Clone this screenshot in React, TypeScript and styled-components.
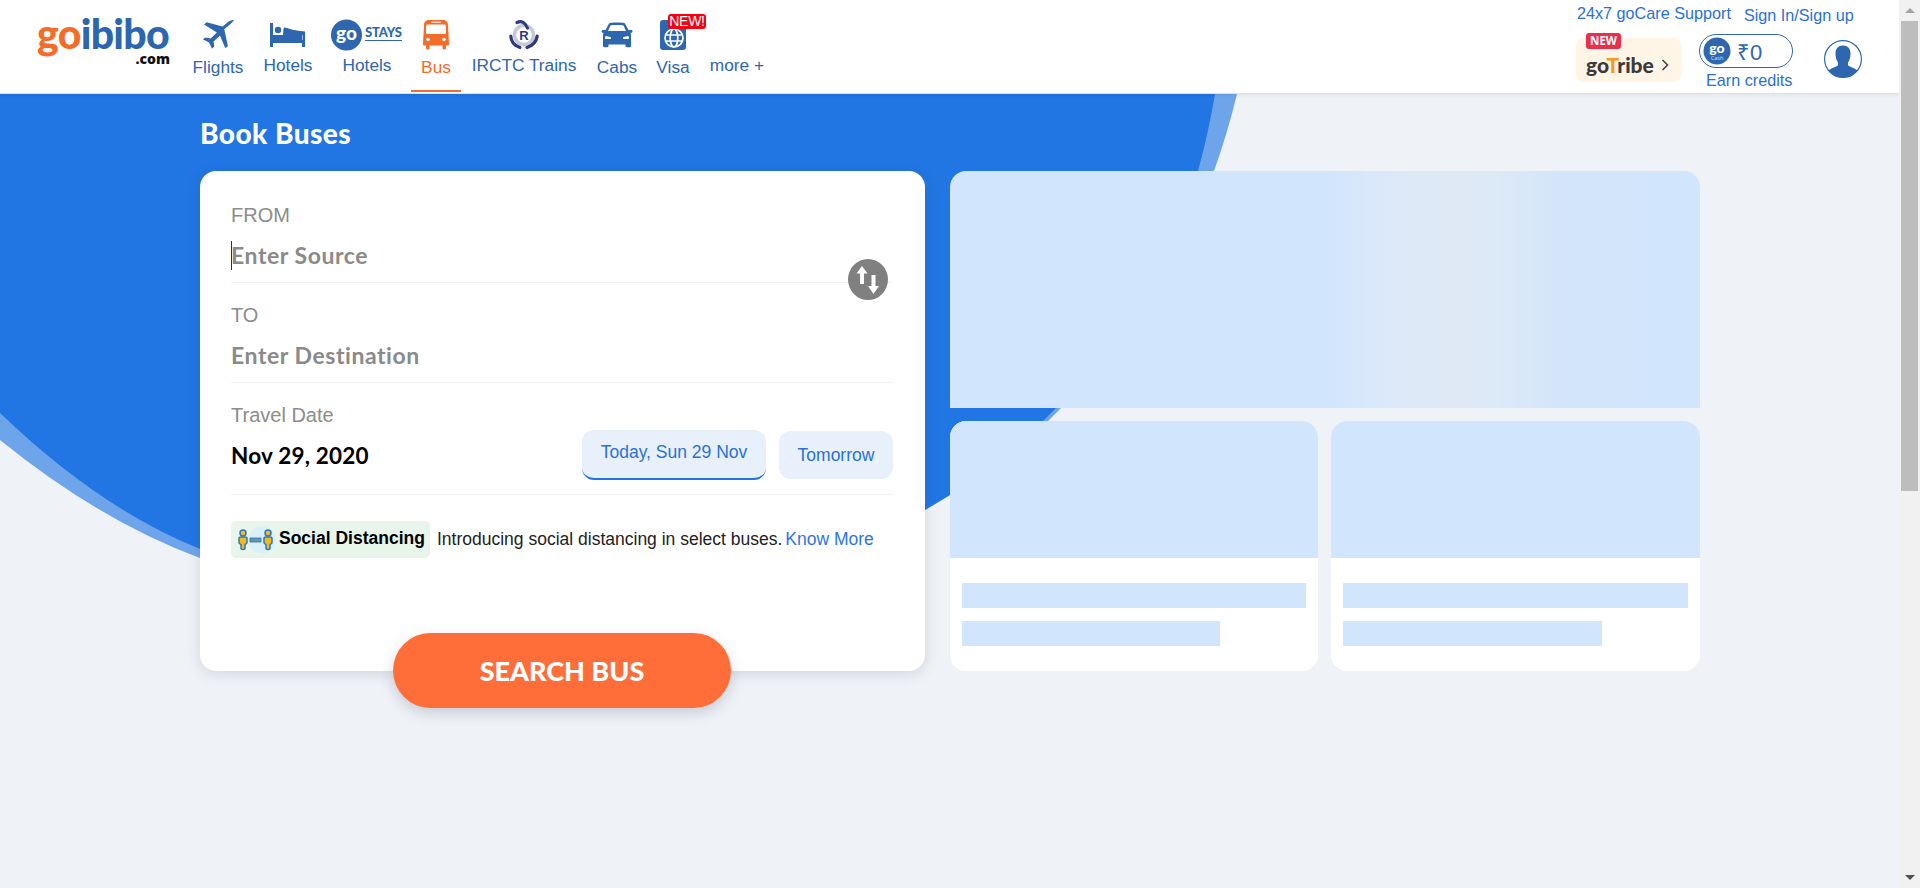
import React from "react";
import styled, { createGlobalStyle } from "styled-components";

const Global = createGlobalStyle`
  html, body { margin: 0; padding: 0; height: 100%; overflow: hidden; background: #eff2f7; }
  #root { height: 100%; }
  * { box-sizing: border-box; }
`;

const Shell = styled.div`
  display: flex;
  height: 888px;
  font-family: "Liberation Sans", Arial, sans-serif;
`;
const Viewport = styled.div`
  position: relative;
  flex: 1;
  min-width: 0;
  overflow: hidden;
  background: #eff2f7;
`;
const Scrollbar = styled.div`
  width: 21px;
  background: #f1f1f1;
  display: flex;
  flex-direction: column;
  align-items: center;
`;
const ScrollArrow = styled.div<{ $down?: boolean }>`
  height: 21px;
  width: 100%;
  display: flex;
  align-items: center;
  justify-content: center;
  flex: none;
  &::before {
    content: "";
    width: 0;
    height: 0;
    border-left: 5px solid transparent;
    border-right: 5px solid transparent;
    ${(p) =>
      p.$down
        ? "border-top: 5px solid #505050;"
        : "border-bottom: 5px solid #a3a3a3;"}
  }
`;
const ScrollThumb = styled.div`
  width: 17px;
  height: 470px;
  background: #bdbdbd;
  flex: none;
`;
const ScrollRest = styled.div`
  flex: 1;
`;

const Wave = styled.svg`
  position: absolute;
  left: 0;
  top: 0;
  width: 1899px;
  height: 888px;
`;

const Header = styled.header`
  position: relative;
  height: 94px;
  background: #fff;
  border-bottom: 1px solid #dfe1e5;
  box-shadow: 0 1px 4px rgba(0, 0, 0, 0.08);
  display: flex;
`;
const LogoBox = styled.div`
  width: 183px;
  flex: none;
  padding: 15px 0 0 37px;
`;
const LogoWord = styled.div`
  width: 133px;
  font-family: "Lato", sans-serif;
  font-weight: 900;
  font-size: 41px;
  line-height: 38px;
  letter-spacing: -0.7px;
  color: #2c66b1;
  white-space: nowrap;
`;
const LogoGo = styled.span`
  color: #f56c28;
`;
const LogoCom = styled.div`
  width: 133px;
  text-align: right;
  font-family: "Open Sans", sans-serif;
  font-weight: 800;
  font-size: 14px;
  line-height: 12px;
  color: #111;
`;
const Nav = styled.nav`
  display: flex;
  height: 93px;
`;
const NavItem = styled.a<{ $w: number; $active?: boolean }>`
  position: relative;
  width: ${(p) => p.$w}px;
  height: 93px;
  display: block;
  text-align: center;
  color: ${(p) => (p.$active ? "#f26b2c" : "#2e66b0")};
  font-size: 17.3px;
  line-height: 20px;
  white-space: nowrap;
`;
const NavIcon = styled.div`
  height: 36px;
  margin-top: 17px;
  display: flex;
  align-items: center;
  justify-content: center;
`;
const NavLabel = styled.div<{ $low?: boolean }>`
  margin-top: ${(p) => (p.$low ? 4 : 2)}px;
`;
const ActiveBar = styled.div`
  position: absolute;
  left: 0;
  right: 0;
  bottom: 1px;
  height: 2px;
  background: #f26b2c;
`;
const NewBadge = styled.span`
  position: absolute;
  left: 21px;
  top: 14px;
  width: 38px;
  height: 15px;
  border-radius: 3px;
  background: #f5000f;
  color: #fff;
  font-size: 14px;
  line-height: 15px;
  text-align: center;
  letter-spacing: -0.3px;
`;
const HeaderRight = styled.div`
  margin-left: auto;
  width: 323px;
  flex: none;
  display: flex;
  flex-direction: column;
`;
const TopLinks = styled.div`
  display: flex;
  height: 33px;
  padding-top: 4px;
  font-size: 16.2px;
  color: #2a70d6;
`;
const SupportLink = styled.a`
  line-height: 19px;
  margin-left: 1px;
`;
const SignLink = styled.a`
  line-height: 19px;
  margin: 2px 0 0 13px;
`;
const BottomRow = styled.div`
  display: flex;
`;
const TribeBox = styled.div`
  position: relative;
  width: 105px;
  height: 44px;
  margin-top: 5px;
  border-radius: 7px;
  background: #fff5e6;
  display: flex;
  align-items: center;
  padding: 9px 0 0 10px;
`;
const TribeTag = styled.span`
  position: absolute;
  left: 10px;
  top: -5px;
  width: 35px;
  height: 16px;
  border-radius: 3px;
  background: #e8304e;
  color: #fff;
  font-family: "Open Sans", sans-serif;
  font-weight: 700;
  font-size: 11.5px;
  line-height: 16px;
  text-align: center;
`;
const TribeWord = styled.span`
  font-family: "Lato", sans-serif;
  font-weight: 900;
  font-size: 21px;
  line-height: 24px;
  color: #3b3b3b;
`;
const TribeT = styled.span`
  color: #f59a23;
`;
const TribeChevron = styled.svg`
  margin-left: 7px;
`;
const CreditCol = styled.div`
  width: 94px;
  margin-left: 18px;
  display: flex;
  flex-direction: column;
`;
const CreditPill = styled.div`
  height: 34px;
  margin-top: 1px;
  border: 1px solid #2e66b0;
  border-radius: 17px;
  display: flex;
  align-items: center;
  padding-left: 3px;
`;
const CreditAmount = styled.span`
  margin-left: 6px;
  font-size: 22px;
  color: #2e66b0;
`;
const EarnLink = styled.a`
  margin: 3px 0 0 7px;
  font-size: 16.2px;
  line-height: 19px;
  color: #2a70d6;
  white-space: nowrap;
`;
const Avatar = styled.div`
  margin: 7px 0 0 31px;
`;

const Main = styled.main`
  position: relative;
  padding-left: 200px;
  width: 1700px;
`;
const Title = styled.h1`
  margin: 0;
  padding-top: 24px;
  height: 77px;
  font-family: "Lato", sans-serif;
  font-weight: 900;
  font-size: 28px;
  line-height: 30px;
  letter-spacing: 0.45px;
  color: #fff;
`;
const Columns = styled.div`
  display: grid;
  grid-template-columns: 725px 750px;
  column-gap: 25px;
`;
const SearchCard = styled.section`
  position: relative;
  height: 500px;
  background: #fff;
  border-radius: 16px;
  padding: 12px 33px 0 31px;
  box-shadow: 0 3px 14px rgba(60, 70, 90, 0.16);
`;
const Field = styled.div<{ $pb?: number }>`
  padding: 19px 0 ${(p) => p.$pb ?? 10}px;
  border-bottom: 1px solid #eff1f5;
`;
const FieldLabel = styled.div`
  height: 24px;
  font-size: 20px;
  line-height: 26px;
  color: #8c8c8c;
`;
const PlaceholderText = styled.div<{ $caret?: boolean }>`
  position: relative;
  margin-top: 14px;
  height: 32px;
  font-family: "Lato", sans-serif;
  font-weight: 700;
  font-size: 23px;
  line-height: 30px;
  letter-spacing: 0.55px;
  color: #8a8a8a;
  ${(p) =>
    p.$caret
      ? `&::before { content: ""; position: absolute; left: 0; top: 1px; width: 1px; height: 29px; background: #333; }`
      : ""}
`;
const DateRow = styled.div`
  display: flex;
  align-items: center;
  height: 50px;
  margin: 4px -1px 0 0;
`;
const DateValue = styled.div`
  font-family: "Lato", sans-serif;
  font-weight: 700;
  font-size: 22.5px;
  letter-spacing: 0.2px;
  color: #000;
  margin-right: auto;
`;
const Chip = styled.div<{ $active?: boolean }>`
  width: ${(p) => (p.$active ? 184 : 114)}px;
  height: ${(p) => (p.$active ? 50 : 48)}px;
  padding-bottom: ${(p) => (p.$active ? 4 : 0)}px;
  margin-left: ${(p) => (p.$active ? 0 : 13)}px;
  border-radius: 12px;
  background: #e8f0fb;
  ${(p) => (p.$active ? "border-bottom: 2px solid #2276e3;" : "")}
  color: #2a70d6;
  font-size: 17.5px;
  display: flex;
  align-items: center;
  justify-content: center;
  white-space: nowrap;
`;
const SocialRow = styled.div`
  display: flex;
  align-items: center;
  margin-top: 26px;
`;
const SocialTag = styled.div`
  width: 199px;
  height: 37px;
  border-radius: 5px;
  background: #e8f5ea;
  display: flex;
  align-items: center;
  padding: 0 0 3px 6px;
  font-weight: 700;
  font-size: 17.5px;
  color: #000;
  white-space: nowrap;
`;
const SocialIcon = styled.svg`
  margin: 3px 2px 0 0;
  flex: none;
`;
const SocialText = styled.span`
  margin-left: 7px;
  font-size: 17.5px;
  color: #222;
  white-space: nowrap;
`;
const KnowMore = styled.a`
  margin-left: 3px;
  font-size: 17.5px;
  color: #2f74e6;
  white-space: nowrap;
`;
const SwapButton = styled.div`
  position: absolute;
  left: 648px;
  top: 88px;
  width: 40px;
  height: 41px;
  border-radius: 50%;
  background: #808080;
  display: flex;
  align-items: center;
  justify-content: center;
`;
const SearchButton = styled.button`
  position: absolute;
  left: 193px;
  top: 462px;
  width: 338px;
  height: 75px;
  border: 0;
  border-radius: 38px;
  background: #ff6d38;
  color: #fff;
  font-family: "Lato", sans-serif;
  font-weight: 900;
  font-size: 27px;
  box-shadow: 0 5px 14px rgba(60, 70, 90, 0.22);
`;
const OfferColumn = styled.aside`
  display: flex;
  flex-direction: column;
  gap: 13px;
`;
const Banner = styled.div`
  height: 237px;
  border-radius: 16px 16px 0 0;
  background: linear-gradient(
    90deg,
    #d1e5fd 0%,
    #d1e5fd 50%,
    #d9e8fa 56%,
    #dde9f7 62%,
    #dfe9f5 68%,
    #dce9f7 73%,
    #d3e5fb 82%,
    #d1e5fd 100%
  );
`;
const OfferGrid = styled.div`
  display: grid;
  grid-template-columns: 368px 369px;
  gap: 13px;
`;
const OfferCard = styled.div`
  height: 250px;
  background: #fff;
  border-radius: 16px;
  overflow: hidden;
`;
const OfferImage = styled.div`
  height: 137px;
  background: #d1e5fd;
`;
const OfferBody = styled.div`
  padding: 25px 12px 0;
`;
const OfferBar = styled.div<{ $short?: boolean }>`
  height: 25px;
  width: ${(p) => (p.$short ? "75%" : "100%")};
  background: #d1e5fd;
  margin-bottom: 13px;
`;

const Blue = "#2e66b0";

const PlaneIcon = () => (
  <svg width="34" height="34" viewBox="0 0 36 36">
    <path
      fill={Blue}
      d="M35 2.500c-1-1-3.600-.3-6 1.600l-6.200 5L6 4.600 3.200 7l13.600 8.400-6.600 6.200-5.400-1L2 22.400l6.500 3.600 3.200 6.500 2.400-2.500-.8-5.200 6.800-6.200 5.700 13.400 2.700-2.400-3.900-17.600 6.600-5.600c2.200-2.100 4.600-4.900 3.800-5.900z"
    />
  </svg>
);
const BedIcon = () => (
  <svg width="36" height="26" viewBox="0 0 36 26">
    <path fill={Blue} d="M0 1h3v17h29v-7.500l-17-5c-1-.3-1.500.5-1.500 1.500V13H3v5h29.500V11H35v14h-3v-4H3v4H0z" />
    <path fill={Blue} d="M14 7l21 2.500V13H13z" />
    <circle cx="8" cy="8" r="3.200" fill={Blue} />
  </svg>
);
const StaysIcon = () => (
  <svg width="72" height="32" viewBox="0 0 72 32">
    <circle cx="15.500" cy="16" r="15.500" fill={Blue} />
    <text x="15.500" y="21" textAnchor="middle" fontFamily="Lato" fontWeight="900" fontSize="19" fill="#fff">
      go
    </text>
    <text x="34" y="18" fontFamily="Lato" fontWeight="900" fontSize="13" fill={Blue} textLength="37">
      STAYS
    </text>
    <rect x="34" y="21" width="37" height="1" fill={Blue} />
  </svg>
);
const BusIcon = () => (
  <svg width="26" height="32" viewBox="0 0 26 32">
    <path
      fill="#f56c28"
      d="M6 1h14c3 0 5 2 5 5l1 19c0 1-.5 1.500-1.500 1.500H23V29c0 2-3.500 2-3.500 0v-2.500h-13V29c0 2-3.500 2-3.500 0v-2.500H1.500C.5 26.500 0 26 0 25L1 6c0-3 2-5 5-5z"
    />
    <rect x="3" y="5.500" width="20" height="9.500" rx="1.500" fill="#fff" />
    <rect x="8" y="2.500" width="10" height="1.500" rx=".75" fill="#ffd9c6" />
    <circle cx="5" cy="20.500" r="1.800" fill="#fff" />
    <circle cx="21" cy="20.500" r="1.800" fill="#fff" />
  </svg>
);
const IrctcIcon = () => (
  <svg width="30" height="32" viewBox="0 0 30 32">
    <circle cx="15" cy="16" r="9.500" fill="none" stroke="#c6c9d3" strokeWidth="3.500" />
    <g fill="none" stroke="#2d3a7c" strokeWidth="3.200" strokeLinecap="round">
      <path d="M8 3.500Q15 .5 18.500 9" />
      <path d="M1.800 17Q2 25.500 11 28.500" />
      <path d="M28.200 17Q27 25.500 18 28.500" />
    </g>
    <text x="15" y="21" textAnchor="middle" fontFamily="Liberation Sans" fontWeight="700" fontSize="13" fill="#2d3a7c">
      R
    </text>
  </svg>
);
const CarIcon = () => (
  <svg width="32" height="26" viewBox="0 0 32 26">
    <path
      fill={Blue}
      d="M8 1.500C9 .8 11 .5 16 .5s7 .3 8 1l3.500 6.500H30c1 0 1.500.5 1.500 1.300S31 11 29.500 11l.5 1.500V24c0 .8-.5 1.200-1.200 1.200h-3c-.8 0-1.300-.4-1.300-1.200v-1.500h-17V24c0 .8-.5 1.200-1.300 1.200h-3C2.500 25.200 2 24.800 2 24V12.500L2.500 11C1 11 .5 10 .5 9.300S1 8 2 8h2.500z"
    />
    <path fill="#fff" d="M9.500 3.500C11 3 13 3 16 3s5 0 6.500.5L25 9H7z" />
    <path fill="#fff" d="M4.500 14l5 1c.8.3.8 2-.3 2H5c-.7 0-1-.5-1-1zM27.500 14l-5 1c-.8.3-.8 2 .3 2H27c.7 0 1-.5 1-1z" />
  </svg>
);
const VisaIcon = () => (
  <svg width="26" height="32" viewBox="0 0 26 32">
    <rect y="1" width="26" height="30" rx="3" fill={Blue} />
    <g fill="none" stroke="#fff" strokeWidth="1.700">
      <circle cx="14" cy="19" r="9" />
      <ellipse cx="14" cy="19" rx="3.800" ry="9" />
      <path d="M5.500 16h17M5.500 22h17" />
    </g>
  </svg>
);
const GoCash = () => (
  <svg width="28" height="28" viewBox="0 0 28 28">
    <circle cx="14" cy="14" r="13.500" fill={Blue} />
    <text x="14" y="15.500" textAnchor="middle" fontFamily="Lato" fontWeight="900" fontSize="14" fill="#fff">
      go
    </text>
    <text x="14" y="22.500" textAnchor="middle" fontFamily="Open Sans" fontSize="5.500" fill="#cfe0f5">
      Cash
    </text>
  </svg>
);
const AvatarIcon = () => (
  <svg width="38" height="38" viewBox="0 0 38 38">
    <circle cx="19" cy="19" r="18.400" fill="#fff" stroke={Blue} strokeWidth="1.200" />
    <path
      fill={Blue}
      d="M19 5.500c4.800 0 7.500 3 7.500 8 0 4-1 7-2.500 9v2.500c0 1.500 6 2.500 9.500 5.500A18 18 0 0 1 19 37.200 18 18 0 0 1 4.500 30.500C8 27.500 14 26.500 14 25v-2.500c-1.500-2-2.500-5-2.500-9 0-5 2.700-8 7.500-8z"
    />
  </svg>
);
const Person = ({ x }: { x: number }) => (
  <g>
    <circle cx={x} cy="7" r="3" fill="#f7b917" stroke="#2d78c4" strokeWidth="1.500" />
    <path
      d={`M${x - 4} 12.500c0-1 1-1.500 2-1.500h4c1 0 2 .5 2 1.500v4c0 1.300-1.500 1.500-2 2v3.500c0 1-1 1.500-2 1.500s-2-.5-2-1.500v-3.500c-.5-.5-2-.7-2-2z`}
      fill="#f7b917"
      stroke="#2d78c4"
      strokeWidth="1.500"
    />
  </g>
);
const SocialGlyph = () => (
  <SocialIcon width="40" height="28" viewBox="0 0 40 28">
    <ellipse cx="25" cy="14" rx="14" ry="13.500" fill="#d9f0f8" />
    <Person x={6} />
    <rect x="13" y="12" width="11" height="4" fill="#6a93a8" stroke="#2d78c4" strokeWidth=".8" />
    <Person x={31} />
  </SocialIcon>
);

export default function App() {
  return (
    <>
      <Global />
      <Shell>
        <Viewport>
          <Wave viewBox="0 0 1899 888" aria-hidden>
            <path
              fill="#6ea5ea"
              d="M0 94H1237Q1227 135 1214 171C1170 290 1115 360 1061 408L1048 421L950 495L925 510L200 558Q100 521 0 440Z"
            />
            <path
              fill="#2176e3"
              d="M0 94H1215Q1208 135 1198 171C1160 290 1100 365 1056 408L1043 421L950 495L925 510L200 549Q100 509 0 413Z"
            />
          </Wave>
          <Header>
            <LogoBox>
              <LogoWord>
                <LogoGo>go</LogoGo>ibibo
              </LogoWord>
              <LogoCom>.com</LogoCom>
            </LogoBox>
            <Nav>
              <NavItem $w={70}>
                <NavIcon><PlaneIcon /></NavIcon>
                <NavLabel $low>Flights</NavLabel>
              </NavItem>
              <NavItem $w={70}>
                <NavIcon><BedIcon /></NavIcon>
                <NavLabel>Hotels</NavLabel>
              </NavItem>
              <NavItem $w={88}>
                <NavIcon><StaysIcon /></NavIcon>
                <NavLabel>Hotels</NavLabel>
              </NavItem>
              <NavItem $w={50} $active>
                <NavIcon><BusIcon /></NavIcon>
                <NavLabel $low>Bus</NavLabel>
                <ActiveBar />
              </NavItem>
              <NavItem $w={126}>
                <NavIcon><IrctcIcon /></NavIcon>
                <NavLabel>IRCTC Trains</NavLabel>
              </NavItem>
              <NavItem $w={60}>
                <NavIcon><CarIcon /></NavIcon>
                <NavLabel $low>Cabs</NavLabel>
              </NavItem>
              <NavItem $w={52}>
                <NavIcon><VisaIcon /></NavIcon>
                <NavLabel $low>Visa</NavLabel>
                <NewBadge>NEW!</NewBadge>
              </NavItem>
              <NavItem $w={76}>
                <NavIcon />
                <NavLabel>more +</NavLabel>
              </NavItem>
            </Nav>
            <HeaderRight>
              <TopLinks>
                <SupportLink>24x7 goCare Support</SupportLink>
                <SignLink>Sign In/Sign up</SignLink>
              </TopLinks>
              <BottomRow>
                <TribeBox>
                  <TribeTag>NEW</TribeTag>
                  <TribeWord>
                    go<TribeT>T</TribeT>ribe
                  </TribeWord>
                  <TribeChevron width="8" height="12" viewBox="0 0 8 12">
                    <path d="M1.500 1l5 5-5 5" fill="none" stroke="#444" strokeWidth="1.600" />
                  </TribeChevron>
                </TribeBox>
                <CreditCol>
                  <CreditPill>
                    <GoCash />
                    <CreditAmount>₹0</CreditAmount>
                  </CreditPill>
                  <EarnLink>Earn credits</EarnLink>
                </CreditCol>
                <Avatar><AvatarIcon /></Avatar>
              </BottomRow>
            </HeaderRight>
          </Header>
          <Main>
            <Title>Book Buses</Title>
            <Columns>
              <SearchCard>
                <Field>
                  <FieldLabel>FROM</FieldLabel>
                  <PlaceholderText $caret>Enter Source</PlaceholderText>
                </Field>
                <Field>
                  <FieldLabel>TO</FieldLabel>
                  <PlaceholderText>Enter Destination</PlaceholderText>
                </Field>
                <Field $pb={14}>
                  <FieldLabel>Travel Date</FieldLabel>
                  <DateRow>
                    <DateValue>Nov 29, 2020</DateValue>
                    <Chip $active>Today, Sun 29 Nov</Chip>
                    <Chip>Tomorrow</Chip>
                  </DateRow>
                </Field>
                <SocialRow>
                  <SocialTag>
                    <SocialGlyph />
                    Social Distancing
                  </SocialTag>
                  <SocialText>Introducing social distancing in select buses.</SocialText>
                  <KnowMore>Know More</KnowMore>
                </SocialRow>
                <SwapButton>
                  <svg width="24" height="28" viewBox="0 0 24 28">
                    <path fill="#fff" d="M6 0l5.500 7.500H8V18H4V7.500H.5z" />
                    <path fill="#fff" d="M17.500 28L12 20h3.500V9h4v11H23z" />
                  </svg>
                </SwapButton>
                <SearchButton>SEARCH BUS</SearchButton>
              </SearchCard>
              <OfferColumn>
                <Banner />
                <OfferGrid>
                  {[0, 1].map((i) => (
                    <OfferCard key={i}>
                      <OfferImage />
                      <OfferBody>
                        <OfferBar />
                        <OfferBar $short />
                      </OfferBody>
                    </OfferCard>
                  ))}
                </OfferGrid>
              </OfferColumn>
            </Columns>
          </Main>
        </Viewport>
        <Scrollbar>
          <ScrollArrow />
          <ScrollThumb />
          <ScrollRest />
          <ScrollArrow $down />
        </Scrollbar>
      </Shell>
    </>
  );
}
